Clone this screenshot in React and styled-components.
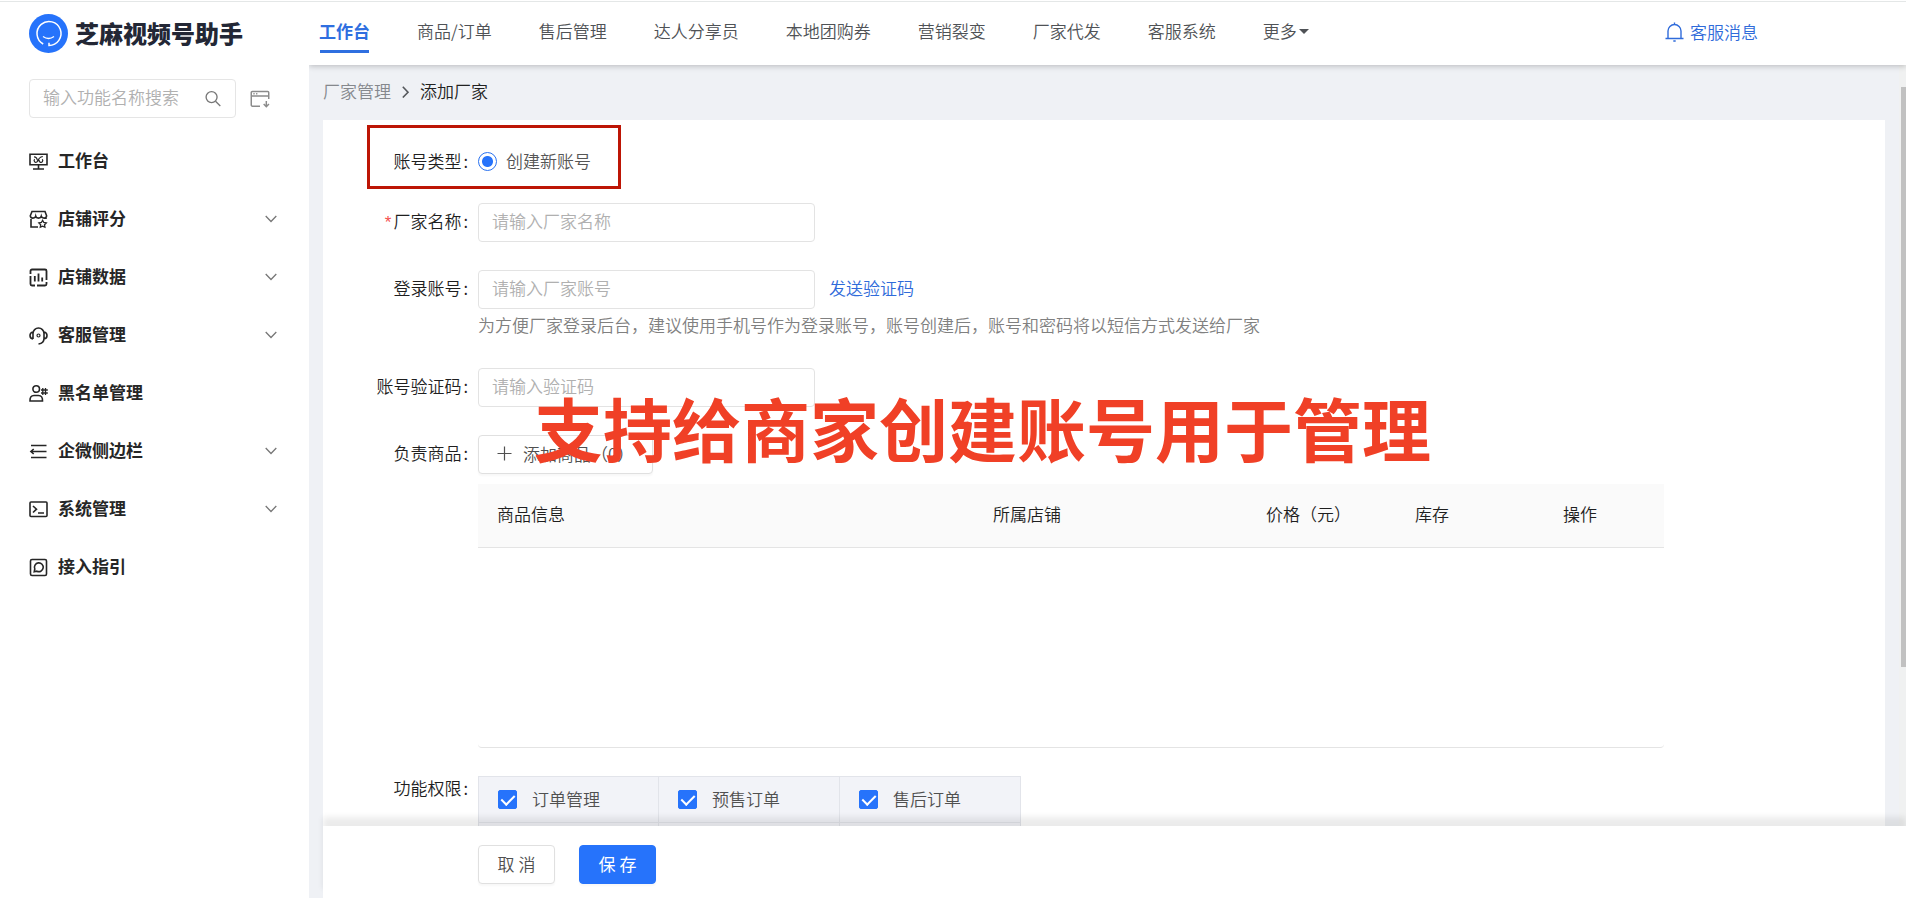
import React from 'react';
import styled, { createGlobalStyle } from 'styled-components';

const GlobalStyle = createGlobalStyle`
  * {
    box-sizing: border-box;
  }

  body {
    margin: 0;
    background: #fff;
    color: #1f1f1f;
    font-family: 'Noto Sans CJK SC', sans-serif;
    font-size: 17px;
    font-weight: 350;
    line-height: 24px;
  }

  button,
  input {
    font: inherit;
  }
`;

const Page = styled.div`
  position: relative;
  display: flex;
  flex-direction: column;
  height: 100vh;
  padding-top: 1px;
  overflow: hidden;
`;

const Shell = styled.div`
  display: flex;
  flex: 1;
  min-height: 0;
  border-top: 1px solid #e4e7e7;
`;

/* sidebar */

const Sidebar = styled.aside`
  flex: none;
  width: 309px;
  padding: 12px 32px 0 29px;
`;

const Brand = styled.div`
  display: flex;
  align-items: center;
  gap: 7px;
  height: 39px;
  color: #232735;
  font-size: 24px;
  font-weight: 900;
  white-space: nowrap;
`;

const BrandName = styled.span`
  padding-bottom: 2px;
`;

const SearchRow = styled.div`
  display: flex;
  align-items: center;
  gap: 14px;
  margin: 26px 0 14px;
`;

const SearchBox = styled.label`
  display: flex;
  align-items: center;
  width: 207px;
  height: 39px;
  padding: 0 13px;
  border: 1px solid #e5e5e5;
  border-radius: 4px;
`;

const SearchInput = styled.input`
  flex: 1;
  min-width: 0;
  padding: 0 0 4px;
  border: 0;
  outline: 0;
  background: none;

  &::placeholder {
    color: #b0b0b0;
  }
`;

const IconButton = styled.button`
  display: flex;
  padding: 0;
  border: 0;
  background: none;
  cursor: pointer;
`;

const MenuItem = styled.a`
  display: flex;
  align-items: center;
  height: 58px;
  color: #262626;
  font-weight: 700;
  text-decoration: none;
`;

const MenuText = styled.span`
  flex: 1;
  margin-left: 10px;
  padding-bottom: 3px;
`;

/* header */

const Main = styled.main`
  display: flex;
  flex: 1;
  flex-direction: column;
  min-width: 0;
  overflow: hidden;
  background: #eff1f5;
`;

const Header = styled.header`
  position: relative;
  z-index: 2;
  display: flex;
  flex: none;
  align-items: center;
  justify-content: space-between;
  height: 63px;
  padding: 0 148px 3px 10px;
  background: #fff;
  box-shadow: 0 1px 6px rgba(0, 0, 0, 0.24);
`;

const Nav = styled.nav`
  display: flex;
  gap: 47px;
`;

const NavLink = styled.a`
  position: relative;
  display: flex;
  align-items: center;
  padding-bottom: 2px;
  color: ${({ $active }) => ($active ? '#2f6fe0' : '#4f5256')};
  font-weight: ${({ $active }) => ($active ? 700 : 350)};
  text-decoration: none;
  white-space: nowrap;

  &::after {
    content: '';
    display: ${({ $active }) => ($active ? 'block' : 'none')};
    position: absolute;
    right: 1px;
    bottom: -8px;
    left: 1px;
    height: 3px;
    background: #2f6fe0;
  }
`;

const Caret = styled.span`
  margin-left: 2px;
  border: 5px solid transparent;
  border-top-color: #4f5256;
  border-bottom: 0;
`;

const MessageLink = styled.a`
  display: flex;
  align-items: center;
  gap: 6px;
  color: #2f6bda;
  text-decoration: none;
`;

/* content */

const Content = styled.div`
  display: flex;
  flex: 1;
  min-height: 0;
`;

const ScrollArea = styled.div`
  flex: 1;
  min-width: 0;
  padding: 0 14px;
  overflow-y: auto;
  scrollbar-width: none;
`;

const ScrollTrack = styled.div`
  flex: none;
  width: 7px;
  padding: 22px 0 0 2px;
  background: #f0f1f1;
`;

const ScrollThumb = styled.div`
  height: 580px;
  background: #c1c1c1;
`;

const Breadcrumb = styled.nav`
  display: flex;
  align-items: center;
  gap: 10px;
  height: 55px;
  padding-bottom: 4px;
  color: #222;
`;

const CrumbLink = styled.a`
  color: #85888d;
  text-decoration: none;
`;

const Card = styled.form`
  position: relative;
  display: flex;
  flex-direction: column;
  gap: 28px;
  padding: 27px 0 80px;
  background: #fff;
`;

const Highlight = styled.div`
  position: absolute;
  top: 5px;
  left: 44px;
  width: 254px;
  height: 64px;
  border: 3px solid #bd1505;
  pointer-events: none;
`;

const Row = styled.div`
  display: flex;
`;

const Label = styled.label`
  flex: none;
  width: 155px;
  padding-right: 10px;
  line-height: ${({ $height }) => $height || 36}px;
  text-align: right;

  &::after {
    content: ':';
    margin-left: 2px;
  }
`;

const Required = styled.span`
  margin-right: 2px;
  color: #f5504d;
  font-family: 'Liberation Sans', sans-serif;
`;

const Field = styled.div`
  flex: 1;
  min-width: 0;
`;

const FieldLine = styled.div`
  display: flex;
  align-items: center;
  gap: 14px;
`;

const TextInput = styled.input`
  display: block;
  width: 337px;
  height: 39px;
  padding: 0 13px 4px;
  border: 1px solid #e3e3e3;
  border-radius: 4px;
  outline: 0;

  &::placeholder {
    color: #b0b0b0;
  }
`;

const RadioLabel = styled.label`
  display: flex;
  align-items: center;
  gap: 9px;
  width: max-content;
  height: 28px;
  color: #555;
`;

const Radio = styled.input`
  appearance: none;
  width: 19px;
  height: 19px;
  margin: 0;
  border: 1px solid #2a72f0;
  border-radius: 50%;

  &:checked {
    background: radial-gradient(circle, #2673fb 5px, #fff 6px);
  }
`;

const TextLink = styled.a`
  padding-bottom: 3px;
  color: #2f6bda;
  text-decoration: none;
`;

const Hint = styled.p`
  margin: 0;
  color: #808080;
  line-height: 31px;
`;

const Button = styled.button`
  display: inline-flex;
  align-items: center;
  justify-content: center;
  gap: 11px;
  min-width: 77px;
  height: 39px;
  padding: 0 18px 2px;
  border: 1px solid ${({ $primary }) => ($primary ? '#2673fb' : '#e0e0e0')};
  border-radius: 4px;
  background: ${({ $primary }) => ($primary ? '#2673fb' : '#fff')};
  box-shadow: 0 2px 2px rgba(0, 0, 0, 0.03);
  color: ${({ $primary }) => ($primary ? '#fff' : '#505050')};
  font-weight: ${({ $primary }) => ($primary ? 400 : 350)};
  white-space: nowrap;
  cursor: pointer;
`;

const TableBox = styled.div`
  max-width: 1186px;
  margin-top: 10px;
  border-bottom: 1px solid #e4e4e4;
  border-radius: 0 0 4px 4px;
`;

const Table = styled.table`
  width: 100%;
  border-collapse: collapse;
  table-layout: fixed;
`;

const Th = styled.th`
  width: ${({ $width }) => $width};
  height: 63px;
  padding: 0 19px 2px;
  border-bottom: 1px solid #e4e4e4;
  background: #fafafa;
  font-weight: 350;
  text-align: left;
  white-space: nowrap;
`;

const EmptyCell = styled.td`
  height: 200px;
`;

const PermissionGrid = styled.div`
  display: grid;
  grid-template-columns: repeat(3, 181px);
  width: max-content;
  border-top: 1px solid #e2e4ea;
`;

const Permission = styled.div`
  height: 46px;
  padding-left: 19px;
  border-right: 1px solid #e2e4ea;
  border-bottom: 1px solid #e2e4ea;
  background: #f2f3f8;

  &:nth-child(3n + 1) {
    border-left: 1px solid #e2e4ea;
  }
`;

const CheckLabel = styled.label`
  display: flex;
  align-items: center;
  gap: 15px;
  height: 45px;
  color: #505050;
`;

const CheckText = styled.span`
  padding-bottom: 2px;
`;

const Checkbox = styled.input`
  appearance: none;
  display: flex;
  justify-content: center;
  width: 19px;
  height: 19px;
  margin: 0;
  border: 1px solid #2673fb;
  border-radius: 2px;

  &:checked {
    background: #2673fb;
  }

  &:checked::after {
    content: '';
    width: 6px;
    height: 11px;
    margin-top: 1px;
    border: solid #fff;
    border-width: 0 2px 2px 0;
    transform: rotate(45deg);
  }
`;

const Footer = styled.footer`
  position: relative;
  z-index: 1;
  display: flex;
  flex: none;
  gap: 24px;
  margin-left: 14px;
  padding: 19px 155px 14px;
  background: #fff;
  box-shadow: 0 -9px 6px rgba(0, 0, 0, 0.08);
`;

const Caption = styled.div`
  position: absolute;
  top: 391px;
  left: 534px;
  z-index: 3;
  color: #f04026;
  font-size: 69px;
  font-weight: 700;
  line-height: 72px;
  white-space: nowrap;
  pointer-events: none;
`;

const Svg = ({ size = 19, width = 1.6, children, ...rest }) => (
  <svg
    width={size}
    height={size}
    viewBox="0 0 19 19"
    fill="none"
    stroke="currentColor"
    strokeWidth={width}
    aria-hidden="true"
    {...rest}
  >
    {children}
  </svg>
);

const Logo = () => (
  <svg width="39" height="39" viewBox="0 0 39 39" fill="none" aria-hidden="true">
    <circle cx="19.5" cy="19.5" r="19.5" fill="#2673fb" />
    <path d="M14.2 30A12 12 0 1 1 20 31.5v-2.8" stroke="#fff" strokeWidth="1.5" />
    <path d="M14 22.5q5.5 4 11 0" stroke="#fff" strokeWidth="1.3" />
  </svg>
);

const SearchIcon = () => (
  <Svg size={18} width={1.4} stroke="#777">
    <circle cx="8" cy="7.5" r="5.8" />
    <path d="M12.2 11.8l5 5" />
  </Svg>
);

const WindowIcon = () => (
  <Svg size={20} width={1.4} stroke="#8b8b8b">
    <path d="M9.5 16.3H2.2a1 1 0 0 1-1-1V3.4a1 1 0 0 1 1-1h14.6a1 1 0 0 1 1 1v6.2M1.2 6.7h16.6M3.2 4.6h1.2M5.8 4.6H7" />
    <path d="M15.5 11.5v5M13 14.3l2.5 2.5 2.5-2.5" />
  </Svg>
);

const ChevronDown = () => (
  <svg width="12" height="8" viewBox="0 0 12 8" fill="none" stroke="#777" strokeWidth="1.3" aria-hidden="true">
    <path d="M.7 1L6 6.5 11.3 1" />
  </svg>
);

const ChevronRight = () => (
  <svg width="9" height="14" viewBox="0 0 9 14" fill="none" stroke="#55585c" strokeWidth="1.6" aria-hidden="true">
    <path d="M1.8 2.8L7 8.2l-5.2 5.3" />
  </svg>
);

const BellIcon = () => (
  <svg width="19" height="20" viewBox="0 0 19 20" fill="none" stroke="currentColor" strokeWidth="1.4" aria-hidden="true">
    <path d="M.5 16.5h18M3 16.5V9a6.5 6.5 0 0 1 13 0v7.5M9.5 2.5V.5M8.3 19h2.4" />
  </svg>
);

const PlusIcon = () => (
  <svg width="15" height="15" viewBox="0 0 15 15" stroke="currentColor" strokeWidth="1.2" aria-hidden="true">
    <path d="M7.5 .5v14M.5 7.5h14" />
  </svg>
);

const icons = {
  board: (
    <Svg>
      <path d="M1 2.2h17v10.6H1zM9.5 13v4M4 17h11" />
      <path d="M5 4.8q2.8 0 3.3 3.4M8.6 7.8a1.8 1.8 0 1 1-2.9-.6M9 9Q9.8 5.200 13.8 4.5M10.3 7.8a1.8 1.8 0 1 0 2.8-.6" strokeWidth="1.2" />
    </Svg>
  ),
  shop: (
    <Svg>
      <path d="M2 9v8h7M17 9V8M3 1.5h13l1.6 4.3q-.3 2.3-2.5 2.3T12.3 6.2q-.5 1.9-2.8 1.9T6.7 6.2q-.5 1.9-2.8 1.9T1.3 5.8z" />
      <path d="M13.6 10.3l1.2 2.2 2.5.4-1.8 1.8.4 2.5-2.3-1.1-2.3 1.1.4-2.5-1.8-1.8 2.5-.4z" strokeWidth="1.3" />
    </Svg>
  ),
  data: (
    <Svg width={1.8}>
      <path d="M1.5 6V3A1.5 1.5 0 0 1 3 1.5h13A1.5 1.5 0 0 1 17.5 3v9M1.5 8v8A1.5 1.5 0 0 0 3 17.5h3M17.5 14v2a1.5 1.5 0 0 1-1.5 1.5H8" />
      <path d="M5.8 8v5.5M9.5 5.5v8M13.2 9.5v4" />
    </Svg>
  ),
  headset: (
    <Svg>
      <path d="M4 13V7.5a5.5 5.5 0 0 1 11 0v5q0 4.7-5.5 5.5M4 6Q1 6.5 1 9.500T4 13M15 6q3 .5 3 3.5T15 13" />
      <circle cx="9.5" cy="9.5" r="1.5" strokeWidth="1.2" />
    </Svg>
  ),
  user: (
    <Svg>
      <circle cx="7.2" cy="5" r="3.3" />
      <path d="M1 17q-.3-5.5 4-5.500h4.5q4.3 0 4 5.5z" />
      <path d="M13.8 4v7M16.5 4v7M12 6h6.8M12 9h6.8" strokeWidth="1.3" />
    </Svg>
  ),
  lines: (
    <Svg>
      <path d="M2 3.5h15.5M3 9.5h14.5M2 15.5h15.5M4.7 7L1.9 9.500l2.8 2.5" />
    </Svg>
  ),
  terminal: (
    <Svg>
      <rect x="1" y="2" width="17" height="14.5" rx="1" />
      <path d="M4 6l3.5 3.200L4 12.5M9 13h6" />
    </Svg>
  ),
  guide: (
    <Svg>
      <rect x="1.5" y="1.5" width="16" height="16" rx="1.5" />
      <path d="M5.2 13.8l.6-2.8a4.4 4.4 0 1 1 2.1 2.2z" />
    </Svg>
  ),
};

const menu = [
  { icon: 'board', text: '工作台' },
  { icon: 'shop', text: '店铺评分', more: true },
  { icon: 'data', text: '店铺数据', more: true },
  { icon: 'headset', text: '客服管理', more: true },
  { icon: 'user', text: '黑名单管理' },
  { icon: 'lines', text: '企微侧边栏', more: true },
  { icon: 'terminal', text: '系统管理', more: true },
  { icon: 'guide', text: '接入指引' },
];

const navItems = ['工作台', '商品/订单', '售后管理', '达人分享员', '本地团购券', '营销裂变', '厂家代发', '客服系统'];

const columns = [
  { text: '商品信息', width: 'auto' },
  { text: '所属店铺', width: '273px' },
  { text: '价格（元）', width: '149px' },
  { text: '库存', width: '148px' },
  { text: '操作', width: '120px' },
];

const permissions = ['订单管理', '预售订单', '售后订单'];

function AppSidebar() {
  return (
    <Sidebar>
      <Brand>
        <Logo />
        <BrandName>芝麻视频号助手</BrandName>
      </Brand>
      <SearchRow>
        <SearchBox>
          <SearchInput placeholder="输入功能名称搜索" aria-label="输入功能名称搜索" />
          <SearchIcon />
        </SearchBox>
        <IconButton type="button" aria-label="收起">
          <WindowIcon />
        </IconButton>
      </SearchRow>
      <nav>
        {menu.map((item) => (
          <MenuItem key={item.text} href="#">
            {icons[item.icon]}
            <MenuText>{item.text}</MenuText>
            {item.more && <ChevronDown />}
          </MenuItem>
        ))}
      </nav>
    </Sidebar>
  );
}

function AppHeader() {
  return (
    <Header>
      <Nav>
        {navItems.map((text, i) => (
          <NavLink key={text} href="#" $active={i === 0}>
            {text}
          </NavLink>
        ))}
        <NavLink href="#">
          更多
          <Caret />
        </NavLink>
      </Nav>
      <MessageLink href="#">
        <BellIcon />
        客服消息
      </MessageLink>
    </Header>
  );
}

function FactoryForm() {
  return (
    <Card id="factory">
      <Row>
        <Label htmlFor="type" $height={28}>账号类型</Label>
        <Field>
          <RadioLabel>
            <Radio id="type" type="radio" name="type" defaultChecked />
            创建新账号
          </RadioLabel>
        </Field>
      </Row>
      <Row>
        <Label htmlFor="name">
          <Required>*</Required>
          厂家名称
        </Label>
        <Field>
          <TextInput id="name" placeholder="请输入厂家名称" />
        </Field>
      </Row>
      <Row>
        <Label htmlFor="account">登录账号</Label>
        <Field>
          <FieldLine>
            <TextInput id="account" placeholder="请输入厂家账号" />
            <TextLink href="#">发送验证码</TextLink>
          </FieldLine>
          <Hint>为方便厂家登录后台，建议使用手机号作为登录账号，账号创建后，账号和密码将以短信方式发送给厂家</Hint>
        </Field>
      </Row>
      <Row>
        <Label htmlFor="code">账号验证码</Label>
        <Field>
          <TextInput id="code" placeholder="请输入验证码" />
        </Field>
      </Row>
      <Row>
        <Label htmlFor="goods">负责商品</Label>
        <Field>
          <FieldLine>
            <Button id="goods" type="button">
              <PlusIcon />
              添加商品（0）
            </Button>
          </FieldLine>
          <TableBox>
            <Table>
              <thead>
                <tr>
                  {columns.map((col) => (
                    <Th key={col.text} $width={col.width}>{col.text}</Th>
                  ))}
                </tr>
              </thead>
              <tbody>
                <tr>
                  <EmptyCell colSpan={columns.length} />
                </tr>
              </tbody>
            </Table>
          </TableBox>
        </Field>
      </Row>
      <Row>
        <Label as="div" $height={24}>功能权限</Label>
        <Field>
          <PermissionGrid>
            {permissions.map((text) => (
              <Permission key={text}>
                <CheckLabel>
                  <Checkbox type="checkbox" defaultChecked />
                  <CheckText>{text}</CheckText>
                </CheckLabel>
              </Permission>
            ))}
            <Permission />
            <Permission />
            <Permission />
          </PermissionGrid>
        </Field>
      </Row>
      <Highlight />
    </Card>
  );
}

function App() {
  return (
    <Page>
      <GlobalStyle />
      <Shell>
        <AppSidebar />
        <Main>
          <AppHeader />
          <Content>
            <ScrollArea>
              <Breadcrumb>
                <CrumbLink href="#">厂家管理</CrumbLink>
                <ChevronRight />
                <span>添加厂家</span>
              </Breadcrumb>
              <FactoryForm />
            </ScrollArea>
            <ScrollTrack>
              <ScrollThumb />
            </ScrollTrack>
          </Content>
          <Footer>
            <Button type="reset" form="factory">取 消</Button>
            <Button type="button" $primary>保 存</Button>
          </Footer>
        </Main>
      </Shell>
      <Caption>支持给商家创建账号用于管理</Caption>
    </Page>
  );
}

export default App;
